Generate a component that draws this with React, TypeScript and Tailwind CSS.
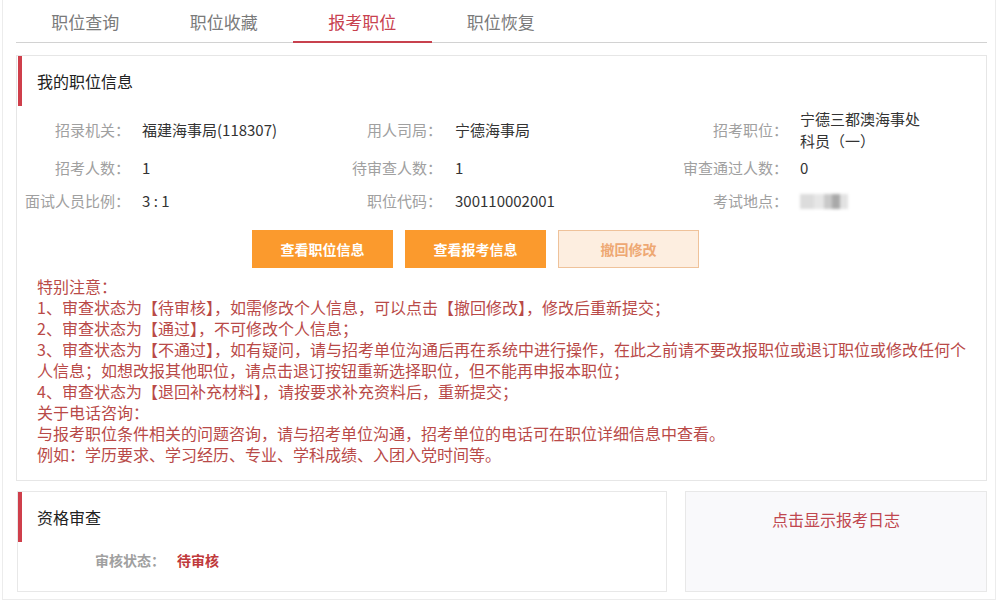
import React from 'react';

const TABS = ['职位查询', '职位收藏', '报考职位', '职位恢复'];

const NOTES = [
  '特别注意：',
  '1、审查状态为【待审核】，如需修改个人信息，可以点击【撤回修改】，修改后重新提交；',
  '2、审查状态为【通过】，不可修改个人信息；',
  '3、审查状态为【不通过】，如有疑问，请与招考单位沟通后再在系统中进行操作，在此之前请不要改报职位或退订职位或修改任何个人信息；如想改报其他职位，请点击退订按钮重新选择职位，但不能再申报本职位；',
  '4、审查状态为【退回补充材料】，请按要求补充资料后，重新提交；',
  '关于电话咨询：',
  '与报考职位条件相关的问题咨询，请与招考单位沟通，招考单位的电话可在职位详细信息中查看。',
  '例如：学历要求、学习经历、专业、学科成绩、入团入党时间等。',
];

function Label({ children, pr = 'pr-[12px]' }: { children: React.ReactNode; pr?: string }) {
  return <div className={`text-right text-[#a0a0a0] whitespace-nowrap ${pr}`}>{children}</div>;
}

function Value({ children }: { children: React.ReactNode }) {
  return <div className="text-[#333] whitespace-nowrap">{children}</div>;
}

export default function App() {
  return (
    <div className="w-[1003px] h-[605px] bg-white font-['Noto_Sans_CJK_SC','Noto_Sans',sans-serif]">
      <div className="ml-[2px] w-[994px] h-[600px] border-x border-b border-[#ececec] pl-[13px] pr-[8px]">
        {/* Tabs */}
        <div className="flex h-[43px] border-b border-[#d2d2d2]">
          {TABS.map((t, i) => (
            <div
              key={t}
              className={`w-[138.5px] flex items-center justify-center pt-[2px] text-[17px] ${
                i === 2
                  ? 'text-[#c8414e] border-b-2 border-[#c8414e] -mb-px'
                  : 'text-[#7a7a7a]'
              }`}
            >
              {t}
            </div>
          ))}
        </div>

        {/* 我的职位信息 */}
        <div className="mt-[12px] h-[426px] border border-[#e6e6e6] bg-white">
          <div className="ml-px flex h-[50px] items-center border-l-4 border-[#cf3f4b] pl-[15px] text-[16px] text-[#222]">
            我的职位信息
          </div>

          <div className="mt-[2px] grid grid-cols-[125px_199px_114px_228px_117px_128px] grid-rows-[44px_32px_34px] items-center text-[15px]">
            <Label>招录机关：</Label>
            <Value>福建海事局(118307)</Value>
            <Label pr="pr-[13px]">用人司局：</Label>
            <Value>宁德海事局</Value>
            <Label>招考职位：</Label>
            <div className="text-[#333] leading-[22px]">宁德三都澳海事处科员（一）</div>

            <Label>招考人数：</Label>
            <Value>1</Value>
            <Label pr="pr-[13px]">待审查人数：</Label>
            <Value>1</Value>
            <Label>审查通过人数：</Label>
            <Value>0</Value>

            <Label>面试人员比例：</Label>
            <Value>3 : 1</Value>
            <Label pr="pr-[13px]">职位代码：</Label>
            <Value>300110002001</Value>
            <Label>考试地点：</Label>
            <div className="flex h-[15px] w-[48px] blur-[1.5px]">
              <div className="w-[14px] bg-[#dcdcdc]" />
              <div className="w-[10px] bg-[#e6e6e6]" />
              <div className="w-[8px] bg-[#c9c9c9]" />
              <div className="w-[8px] bg-[#a9a9a9]" />
              <div className="w-[8px] bg-[#e2e2e2]" />
            </div>
          </div>

          <div className="mt-[12px] ml-[235px] flex gap-[12px] text-[14px] font-bold">
            <button className="h-[38px] w-[141px] bg-[#fb9a2d] text-white">查看职位信息</button>
            <button className="h-[38px] w-[141px] bg-[#fb9a2d] text-white">查看报考信息</button>
            <button className="h-[38px] w-[141px] border border-[#efc29a] bg-[#fdeee0] text-[#eea873]">
              撤回修改
            </button>
          </div>

          <div className="mt-[8px] ml-[20px] w-[940px] text-[16px] leading-[21px] text-[#b94a48]">
            {NOTES.map((n) => (
              <div key={n}>{n}</div>
            ))}
          </div>
        </div>

        {/* Bottom row */}
        <div className="mt-[10px] flex">
          <div className="ml-px h-[101px] w-[650px] border border-[#e8e8e8] bg-white">
            <div className="flex h-[50px] items-center border-l-4 border-[#cf3f4b] pl-[15px] text-[16px] text-[#222]">
              资格审查
            </div>
            <div className="mt-[8px] flex h-[20px] items-center pl-[77px] text-[14px] font-bold">
              <span className="text-[#a0a0a0]">审核状态：</span>
              <span className="ml-[12px] text-[#c0393b]">待审核</span>
            </div>
          </div>
          <div className="ml-[18px] h-[101px] w-[302px] border border-[#e8e8e8] bg-[#f9f9fb] pt-[15px] text-center text-[16px] leading-[24px] text-[#c0474f]">
            点击显示报考日志
          </div>
        </div>
      </div>
    </div>
  );
}
